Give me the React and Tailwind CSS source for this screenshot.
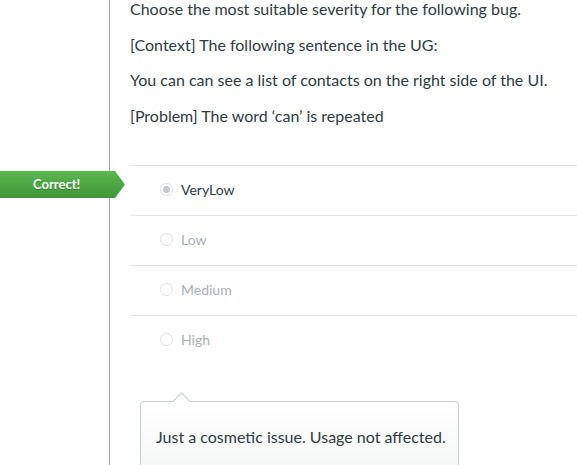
const options = [
  { label: 'VeryLow', selected: true },
  { label: 'Low' },
  { label: 'Medium' },
  { label: 'High' },
]

function Radio({ selected }) {
  return (
    <span className="w-[13px] h-[13px] rounded-full border border-[#dcdfe1] bg-white flex items-center justify-center shrink-0">
      {selected && <span className="w-[7px] h-[7px] rounded-full bg-[#c4c8cb]" />}
    </span>
  )
}

export default function App() {
  return (
    <div className="w-[577px] h-[465px] overflow-hidden bg-white flex text-[#2d3b45] font-['Lato','Liberation_Sans',sans-serif]">
      <div className="w-[110px] shrink-0 border-r border-[#a7a7a7]">
        <div className="mt-[171px] w-[125px] h-[27px] flex items-center pl-[33px] [clip-path:polygon(0_0,115px_0,125px_50%,115px_100%,0_100%)] bg-gradient-to-b from-[#5cb84f] to-[#3f9637] text-white text-[13px] font-bold [text-shadow:0_1px_1px_rgba(0,0,0,0.25)]">
          Correct!
        </div>
      </div>

      <div className="flex-1 pl-[20px] flex flex-col">
        <div className="-mt-[3px] text-[16px] leading-[24px]">
          <p className="mb-[11.5px]">Choose the most suitable severity for the following bug.</p>
          <p className="mb-[11.5px]">[Context] The following sentence in the UG:</p>
          <p className="mb-[11.5px]">You can can see a list of contacts on the right side of the UI.</p>
          <p className="mb-[12px]">[Problem] The word ‘can’ is repeated</p>
        </div>

        <div className="mt-[25.5px]">
          {options.map((o) => (
            <div key={o.label} className="h-[50px] border-t border-[#e3e5e7] flex items-center pl-[30px] pb-[2px] gap-[8px]">
              <Radio selected={o.selected} />
              <span className={`text-[14px] ${o.selected ? 'text-[#2d3b45]' : 'text-[#a9b0b5]'}`}>{o.label}</span>
            </div>
          ))}
        </div>

        <div className="relative ml-[10px] mt-[36px] w-[319px] h-[90px] shrink-0 rounded-[4px] border border-[#c7cdd1] bg-gradient-to-b from-white to-[#f3f4f5] pl-[15px] pt-[23px] text-[16px] leading-[24px]">
          <span className="absolute left-[33.5px] -top-[7.5px] w-[13px] h-[13px] rotate-45 bg-white border-l border-t border-[#c7cdd1]" />
          Just a cosmetic issue. Usage not affected.
        </div>
      </div>
    </div>
  )
}
